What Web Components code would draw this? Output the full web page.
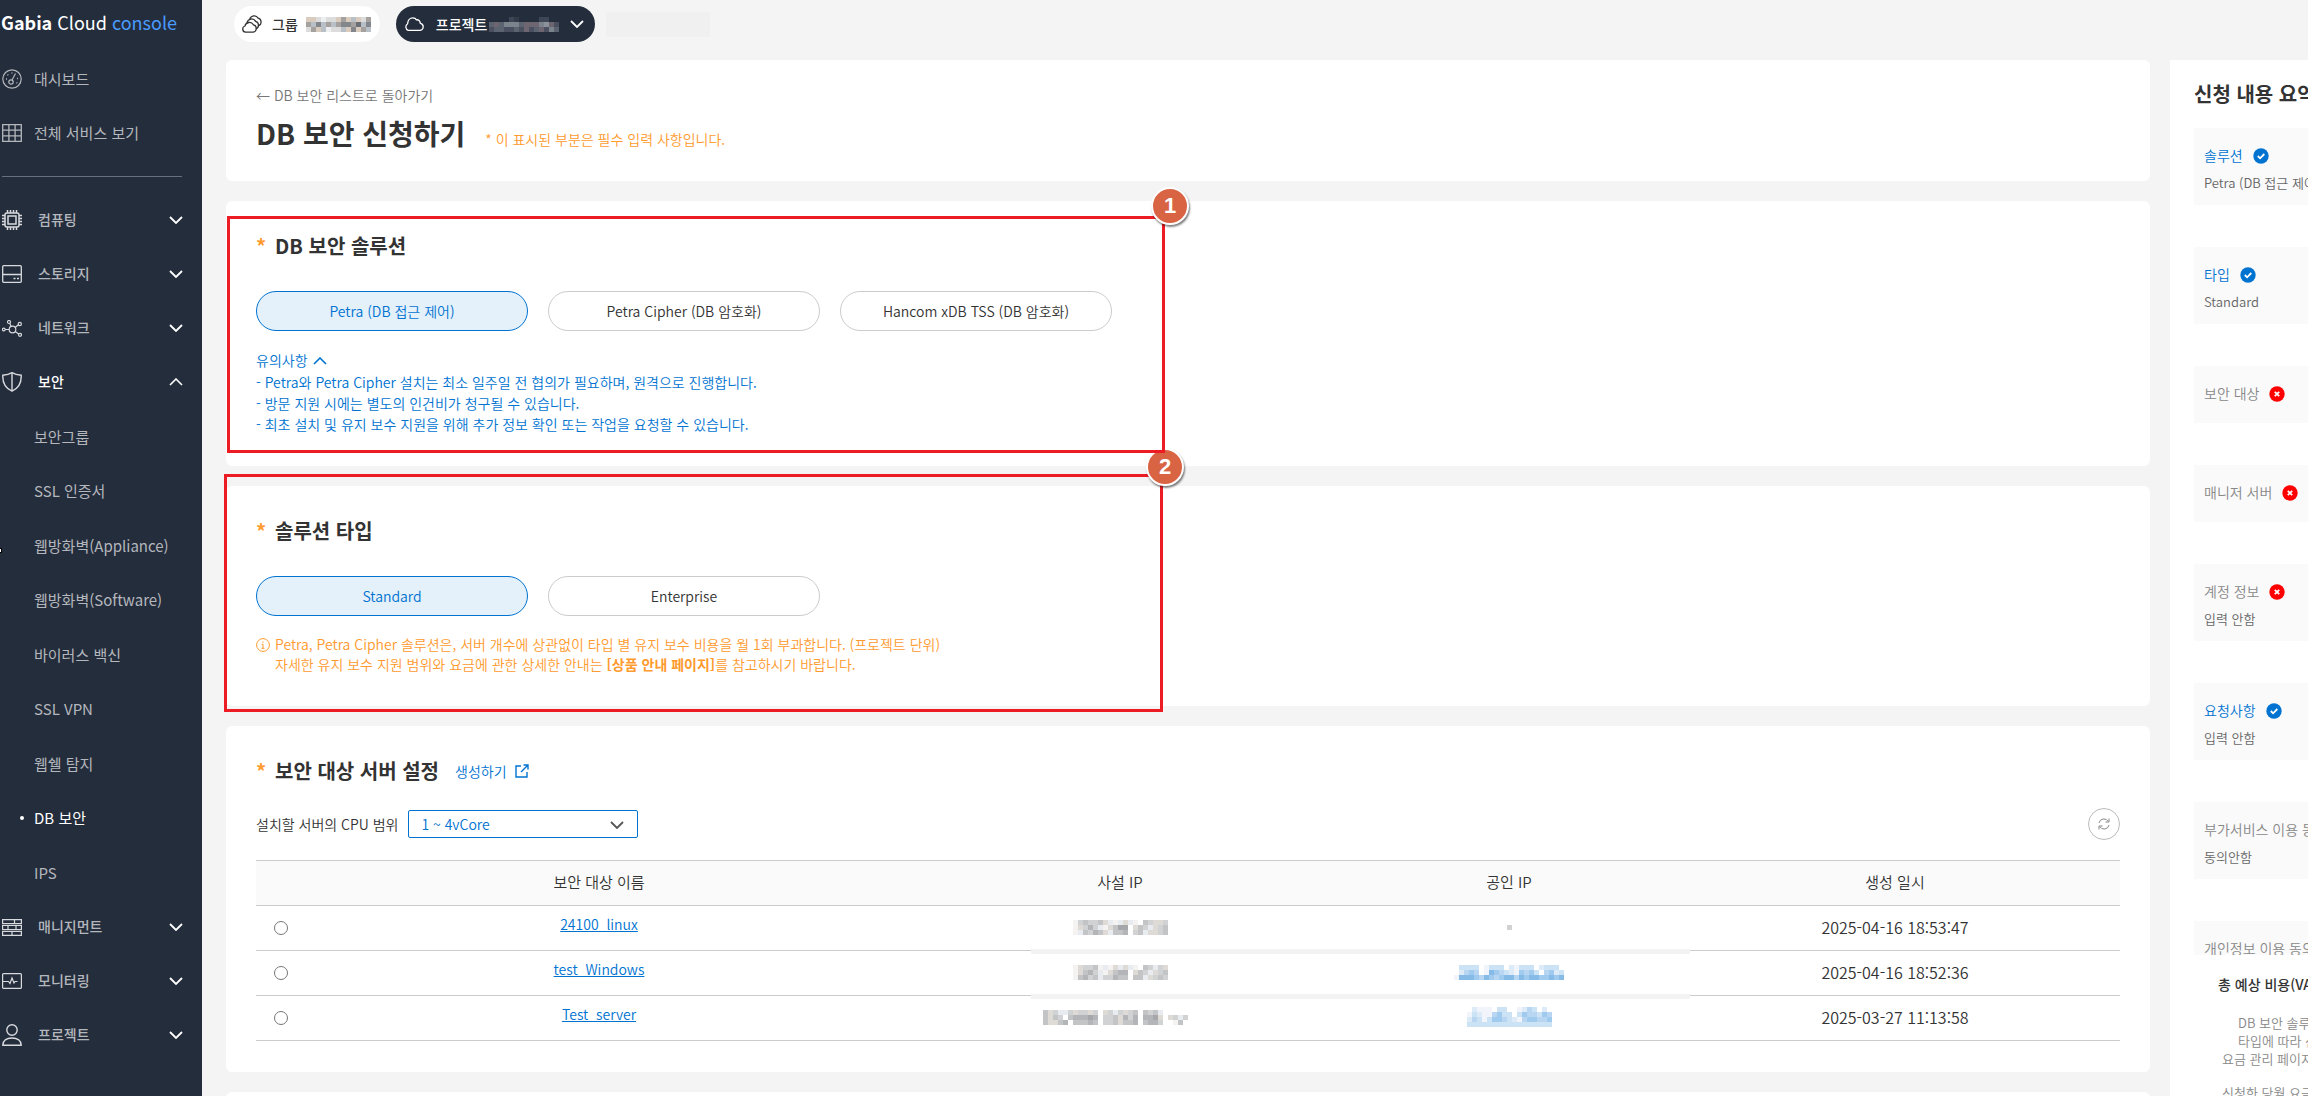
<!DOCTYPE html>
<html lang="ko">
<head>
<meta charset="utf-8">
<title>Gabia Cloud console</title>
<style>
  * { box-sizing: border-box; }
  html, body { height: 100%; margin: 0; }
  body {
    font-family: "Noto Sans CJK KR", "Noto Sans", sans-serif;
    font-size: 14px;
    font-weight: 350;
    line-height: 20px;
    color: #333;
    background: #f4f4f4;
    overflow: hidden;
    --blue: #0073d1;
    --orange: #ff9a2e;
    --navy: #242d3c;
  }
</style>
</head>
<body>
<console-app>
  <console-sidebar slot="side"></console-sidebar>
  <console-topbar slot="top"></console-topbar>

  <page-heading></page-heading>

  <form-card label="DB 보안 솔루션">
    <choice-group options="Petra (DB 접근 제어)|Petra Cipher (DB 암호화)|Hancom xDB TSS (DB 암호화)"></choice-group>
    <notice-list></notice-list>
    <step-marker slot="over" number="1"></step-marker>
  </form-card>

  <form-card label="솔루션 타입">
    <choice-group options="Standard|Enterprise"></choice-group>
    <price-info></price-info>
    <step-marker slot="over" number="2"></step-marker>
  </form-card>

  <form-card label="보안 대상 서버 설정">
    <create-link slot="extra"></create-link>
    <server-picker></server-picker>
  </form-card>

  <form-card label=""></form-card>

  <order-summary slot="aside"></order-summary>
</console-app>

<script>
function createComponent({ name, styles, template }) {
  customElements.define(name, class extends HTMLElement {
    constructor() {
      super();
      this.attachShadow({ mode: 'open' });
    }
    connectedCallback() {
      this.shadowRoot.innerHTML =
        `<style>*{box-sizing:border-box}a{color:inherit}button,select{font:inherit}${styles}</style>` + template(this);
    }
  });
}

// ---- icons ----------------------------------------------------------------
const svg = (w, h, body, extra = '') =>
  `<svg width="${w}" height="${h}" viewBox="0 0 ${w} ${h}" fill="none" stroke="currentColor" ${extra} aria-hidden="true">${body}</svg>`;

const icons = {
  dash: svg(20, 20, '<circle cx="10" cy="10" r="9.2"/><circle cx="9" cy="13" r="2.2"/><path d="M10 11l3.500-6.500"/><path d="M4 10h1M5.500 5.500l.8.800M10 3.500v1M15 9.500h1M14.500 13.500l.8.600" stroke-width="1.400"/>', 'stroke-width="1.200"'),
  grid: svg(20, 18, '<path d="M.7.700h18.600v16.600H.7zM.7 6.200h18.600M.7 11.800h18.600M6.900.700v16.600M13.100.700v16.600"/>', 'stroke-width="1.300"'),
  chip: svg(20, 20, '<rect x="3" y="3" width="14" height="14" rx="2"/><rect x="6" y="6" width="8" height="8" stroke-width="1.500"/><path d="M5.500 0v3M8.500 0v3M11.500 0v3M14.500 0v3M5.500 17v3M8.500 17v3M11.500 17v3M14.500 17v3M0 5.500h3M0 8.500h3M0 11.500h3M0 14.500h3M17 5.500h3M17 8.500h3M17 11.500h3M17 14.500h3"/>', 'stroke-width="1.500"'),
  disk: svg(20, 18, '<rect x=".7" y=".7" width="18.600" height="16.600" rx="1"/><path d="M.7 9.500h18.600M11.500 13.500h2M15 13.500h2"/>', 'stroke-width="1.300"'),
  net: svg(20, 17, '<circle cx="10.500" cy="9.500" r="3.300"/><circle cx="1.800" cy="9.500" r="1.400"/><circle cx="7" cy="2" r="1.500"/><circle cx="17.800" cy="4" r="1.600"/><circle cx="18" cy="14.800" r="1.500"/><path d="M3.200 9.500h4M7.700 3.300l1.400 3.200M16.400 4.800l-3.300 2.700M13.200 11.500l3.500 2.500"/>', 'stroke-width="1.200"'),
  shield: svg(20, 20, '<path d="M10 .7C7.500 2.200 4 3 .8 3.200c-.3 6 1.200 12.300 9.200 16 8-3.700 9.500-10 9.200-16C16 3 12.500 2.200 10 .7z"/><path d="M10 1v18"/>', 'stroke-width="1.400"'),
  bricks: svg(20, 17, '<path d="M.6.600h18.800v4H.6zM.6 6.500h18.800v4H.6zM.6 12.400h18.800v4H.6zM12.500.600v4M6 6.500v4M14 6.500v4M10 12.400v4"/>', 'stroke-width="1.200"'),
  pulse: svg(20, 16, '<rect x=".6" y=".6" width="18.800" height="14.800" rx="1"/><path d="M1 8.500h5.500l1.500 2 2-5.500 2 5 1-1.500h2.500"/>', 'stroke-width="1.200"'),
  user: svg(20, 22, '<circle cx="10" cy="6" r="5.200"/><path d="M.8 21.200c0-4.500 3.700-7.200 9.200-7.200s9.200 2.700 9.200 7.200z"/>', 'stroke-width="1.400"'),
  down: svg(14, 8, '<path d="M1 1l6 6 6-6"/>', 'stroke-width="1.800"'),
  up: svg(14, 8, '<path d="M1 7l6-6 6 6"/>', 'stroke-width="1.600"'),
  clouds: svg(22, 18, '<path d="M3.500 17.200a3.200 3.200 0 0 1-.6-6.200 4.600 4.600 0 0 1 8.500-1.200 3.800 3.800 0 0 1-.2 7.400z"/><path d="M5 7.800a4.600 4.600 0 0 1 8.600-1.400 3.900 3.900 0 0 1 .4 7.400"/><path d="M7.800 4.200a4.600 4.600 0 0 1 8.400-1 4 4 0 0 1 .5 7.500"/>', 'stroke-width="1.300"'),
  cloud: svg(20, 14, '<path d="M4.200 13.300a3.700 3.700 0 0 1-.6-6.600C3.800 3.300 6 .8 8.800.8c2 0 3 .8 3.700 2 2-.3 3.600 1 3.700 3.300 2 .6 3 2 3 3.700 0 2-1.500 3.500-3.500 3.500z"/>', 'stroke-width="1.300"'),
  info: svg(14, 14, '<circle cx="7" cy="7" r="6.400"/><path d="M7 3.500v1.300M5.700 6.300H7v4M5.500 10.300h3"/>', 'stroke-width="1"'),
  external: svg(14, 14, '<path d="M6 2H1v11h11V8"/><path d="M8.500 1H13v4.500M13 1L6 8"/>', 'stroke-width="1.400"'),
  refresh: svg(14, 14, '<path d="M2 6a5 5 0 0 1 9.300-1.500M12 1.500v3.500H8.500M12 8a5 5 0 0 1-9.300 1.500M2 12.500V9h3.500"/>'),
  ok: '<svg width="16" height="16" viewBox="0 0 16 16" role="img" aria-label="완료"><circle cx="8" cy="8" r="7.700" fill="#0073d1"/><path d="M4.800 8l2.300 2.300L11.300 6" fill="none" stroke="#fff" stroke-width="1.800"/></svg>',
  no: '<svg width="16" height="16" viewBox="0 0 16 16" role="img" aria-label="미완료"><circle cx="8" cy="8" r="7.700" fill="#f00"/><path d="M5.800 5.800l4.400 4.400M10.200 5.800l-4.400 4.400" fill="none" stroke="#fff" stroke-width="1.800"/></svg>'
};

// Masked value: every character is one 5px tile, the digit is its strength.
const tones = {
  gray: ['#fff', '#f5f2f2', '#e8ebef', '#dedad6', '#d0d2d4', '#c3c4c6', '#b4b5b8', '#a6a7aa'],
  blue: ['#fff', '#f1f5fb', '#dcebf7', '#cce2f5', '#b8d6f1', '#a0caee', '#86bbe8', '#6fa9dd'],
  mixed: ['#fff', '#eceef0', '#dcdcdc', '#d9cbbd', '#b9bfc7', '#a5a19f', '#83878c', '#6b6e75'],
  dark: ['#242d3c', '#313a49', '#3d4655', '#4b5060', '#5c6370', '#6d6570', '#7b838c', '#8b929a']
};
createComponent({
  name: 'masked-value',
  styles: ':host{display:inline-block;vertical-align:middle}svg{display:block}',
  template(el) {
    const rows = el.getAttribute('tiles').split(',');
    const tone = tones[el.getAttribute('tone') || 'gray'];
    const rects = rows.map((row, y) => [...row].map((c, x) =>
      c === '0' ? '' : `<rect x="${x * 5}" y="${y * 5}" width="5" height="5" fill="${tone[c]}"/>`).join('')).join('');
    return `<svg width="${rows[0].length * 5}" height="${rows.length * 5}" shape-rendering="crispEdges" aria-hidden="true">${rects}</svg>`;
  }
});

// ---- frame ----------------------------------------------------------------
createComponent({
  name: 'console-app',
  styles: `
    :host { display: flex; height: 100vh; overflow: hidden; }
    .body { flex: 1; min-width: 0; display: flex; flex-direction: column; padding-left: 24px; }
    .columns { flex: 1; min-height: 0; display: flex; gap: 20px; }
    main { flex: 1; min-width: 0; display: flex; flex-direction: column; gap: 20px; }
    slot[name=aside] { display: contents; }`,
  template: () => `
    <slot name="side"></slot>
    <div class="body">
      <slot name="top"></slot>
      <div class="columns"><main><slot></slot></main><slot name="aside"></slot></div>
    </div>`
});

const securityMenu = ['보안그룹', 'SSL 인증서', '웹방화벽(Appliance)', '웹방화벽(Software)', '바이러스 백신', 'SSL VPN', '웹쉘 탐지', 'DB 보안', 'IPS'];
const menu = [
  ['chip', '컴퓨팅'], ['disk', '스토리지'], ['net', '네트워크'], ['shield', '보안', securityMenu],
  ['bricks', '매니지먼트'], ['pulse', '모니터링'], ['user', '프로젝트']
];

createComponent({
  name: 'console-sidebar',
  styles: `
    :host { display: block; position: relative; flex: 0 0 202px; background: var(--navy); color: #b4b7bc; font-weight: 400; }
    .logo { display: block; padding: 9px 0 0 1px; font-size: 18px; line-height: 26px; font-weight: 400; color: #fff; text-decoration: none; white-space: nowrap; }
    .logo span { color: #4a9bff; }
    .main-links { margin: 17px 20px 16px 2px; padding-bottom: 16px; border-bottom: 1px solid #687080; }
    .main-links a { display: flex; align-items: center; gap: 12px; height: 54px; font-size: 15px; text-decoration: none; }
    ul { list-style: none; margin: 0; padding: 0; }
    button { display: flex; align-items: center; width: 100%; height: 54px; padding: 0 19px 0 2px; border: 0; background: none; color: inherit; font-weight: 500; text-align: left; }
    button span { flex: 1; padding: 0 0 2px 16px; }
    button svg:last-child { color: #fff; }
    button svg:first-child { color: #d8dade; }
    .open { color: #fff; }
    li li { display: flex; align-items: center; height: 54px; font-size: 15px; }
    li li:nth-child(odd) { height: 55px; }
    li li a { padding-left: 34px; text-decoration: none; }
    li li a[aria-current] { color: #fff; padding-left: 10px; }
    li li:has([aria-current])::before { content: ""; width: 4px; height: 4px; margin-left: 20px; border-radius: 2px; background: #fff; }
    .tick { position: absolute; top: 50%; left: 0; width: 2px; height: 5px; border: 1px solid #000; border-left: 0; background: #fff; }`,
  template: () => `
    <a class="logo" href="#"><b>Gabia</b> Cloud <span>console</span></a>
    <nav class="main-links">
      <a href="#">${icons.dash}대시보드</a>
      <a href="#">${icons.grid}전체 서비스 보기</a>
    </nav>
    <nav><ul>${menu.map(([icon, text, subs]) => `
      <li><button type="button" aria-expanded="${!!subs}" class="${subs ? 'open' : ''}">${icons[icon]}<span>${text}</span>${subs ? icons.up : icons.down}</button>
      ${subs ? `<ul>${subs.map(s => `<li><a href="#"${s === 'DB 보안' ? ' aria-current="page"' : ''}>${s}</a></li>`).join('')}</ul>` : ''}</li>`).join('')}
    </ul></nav>
    <div class="tick"></div>`
});

createComponent({
  name: 'console-topbar',
  styles: `
    :host { display: flex; flex: 0 0 60px; align-items: flex-start; gap: 16px; padding: 6px 0 0 8px; }
    button { display: flex; align-items: center; height: 36px; border: 0; border-radius: 18px; background: #fff; color: #333; font-weight: 500; }
    .group { gap: 8px; padding: 0 9px 0 8px; }
    .project { gap: 2px; padding: 0 11px 0 8px; background: var(--navy); color: #fff; }
    .project span { padding-left: 10px; }
    .project svg:last-child { margin-left: 9px; }
    .blank { width: 104px; height: 25px; margin: 6px 0 0 -5px; background: #f0f0f0; }`,
  template: () => `
    <button type="button" class="group">${icons.clouds}<span>그룹</span>
      <masked-value tone="mixed" tiles="3321223534325,5464545665746,2534122436354"></masked-value></button>
    <button type="button" class="project">${icons.cloud}<span>프로젝트</span>
      <masked-value tone="dark" tiles="00002100002200,45466645556753,34433435345364"></masked-value>${icons.down}</button>
    <div class="blank"></div>`
});

// ---- form -----------------------------------------------------------------
createComponent({
  name: 'page-heading',
  styles: `
    :host { display: block; flex: none; padding: 25px 30px 28px; background: #fff; border-radius: 6px; }
    a { display: block; color: #777; text-decoration: none; }
    div { display: flex; align-items: baseline; gap: 20px; margin-top: 8px; }
    h1 { margin: 0; font-size: 28px; line-height: 40px; font-weight: 700; }
    p { margin: 0; color: var(--orange); }`,
  template: () => `
    <a href="#">← DB 보안 리스트로 돌아가기</a>
    <div><h1>DB 보안 신청하기</h1><p>* 이 표시된 부분은 필수 입력 사항입니다.</p></div>`
});

createComponent({
  name: 'form-card',
  styles: `
    :host { display: block; flex: none; position: relative; padding: 30px 30px 31px; background: #fff; border-radius: 6px; }
    header { display: flex; align-items: center; gap: 16px; }
    h2 { margin: 0; font-size: 20px; line-height: 30px; font-weight: 700; }
    h2 i { display: inline-block; width: 19px; font-style: normal; color: var(--orange); }`,
  template: el => `
    ${el.getAttribute('label') ? `<header><h2><i>*</i>${el.getAttribute('label')}</h2><slot name="extra"></slot></header>` : ''}
    <slot></slot><slot name="over"></slot>`
});

createComponent({
  name: 'choice-group',
  styles: `
    :host { display: flex; gap: 20px; margin-top: 30px; }
    button { width: 272px; height: 40px; border: 1px solid #ccc; border-radius: 20px; background: #fff; color: #333; }
    button[aria-pressed=true] { border-color: var(--blue); background: #e4f0fa; color: var(--blue); }`,
  template: el => el.getAttribute('options').split('|')
    .map((o, i) => `<button type="button" aria-pressed="${i === 0}">${o}</button>`).join('')
});

createComponent({
  name: 'notice-list',
  styles: `
    :host { display: block; margin-top: 19px; color: var(--blue); line-height: 21px; }
    button { display: flex; align-items: center; gap: 5px; margin-bottom: 1px; padding: 0; border: 0; background: none; color: inherit; }
    p { margin: 0; }`,
  template: () => `
    <button type="button" aria-expanded="true">유의사항 ${icons.up}</button>
    <p>- Petra와 Petra Cipher 설치는 최소 일주일 전 협의가 필요하며, 원격으로 진행합니다.</p>
    <p>- 방문 지원 시에는 별도의 인건비가 청구될 수 있습니다.</p>
    <p>- 최초 설치 및 유지 보수 지원을 위해 추가 정보 확인 또는 작업을 요청할 수 있습니다.</p>`
});

createComponent({
  name: 'price-info',
  styles: `
    :host { display: flex; gap: 5px; margin-top: 18px; padding-bottom: 1px; color: var(--orange); }
    svg { flex: none; margin-top: 4px; }
    p { margin: 0; }
    a { font-weight: 700; text-decoration: none; }`,
  template: () => `${icons.info}
    <p>Petra, Petra Cipher 솔루션은, 서버 개수에 상관없이 타입 별 유지 보수 비용을 월 1회 부과합니다. (프로젝트 단위)<br>
    자세한 유지 보수 지원 범위와 요금에 관한 상세한 안내는 <a href="#">[상품 안내 페이지]</a>를 참고하시기 바랍니다.</p>`
});

// red frame with a numbered badge, laid over its card
createComponent({
  name: 'step-marker',
  styles: `
    :host { position: absolute; z-index: 2; top: 15px; left: 1px; width: 938px; height: 237px; border: 3px solid #ed1c24; pointer-events: none; }
    :host([number="2"]) { z-index: 1; top: -12px; left: -2px; width: 939px; height: 238px; }
    b { position: absolute; top: -32px; right: -27px; width: 38px; height: 38px; border: 2px solid #fff; border-radius: 50%; background: #d96444; color: #fff;
      font: bold 22px/34px "Liberation Sans", sans-serif; text-align: center; box-shadow: 1px 2px 2px rgba(0,0,0,.5); }
    :host([number="2"]) b { top: -29px; right: -24px; }`,
  template: el => `<b>${el.getAttribute('number')}</b>`
});

createComponent({
  name: 'create-link',
  styles: ':host{display:block}a{display:flex;align-items:center;gap:8px;color:var(--blue);text-decoration:none}',
  template: () => `<a href="#">생성하기 ${icons.external}</a>`
});

const v = (tiles, tone = 'gray') => `<masked-value tone="${tone}" tiles="${tiles}"></masked-value>`;
const servers = [
  ['24100_linux', v('1454453212321054334,1346421357703542345,1254653255604523345'), v('040'), '2025-04-16 18:53:47'],
  ['test_Windows', v('1344512132321054243,1356421356603542345,1564524465505523454'), v('0333301333021333023330,0245401654321545304523,1666546545664656655656', 'blue'), '2025-04-16 18:52:36'],
  ['Test_server', v('5342243443403424345054520000000,5354056667604453646066730342400,5335605556504453556056640015000'), v('02111033001243020,13211453303544354,24313554321455445,33333333333333333', 'blue'), '2025-03-27 11:13:58']
];

createComponent({
  name: 'server-picker',
  styles: `
    :host { display: block; }
    .bar { display: flex; align-items: center; gap: 10px; margin: 22px 0 20px; }
    .select { position: relative; }
    .select svg { position: absolute; top: 11px; right: 14px; color: #555; pointer-events: none; }
    select { width: 230px; height: 28px; padding: 0 12px; border: 1px solid var(--blue); border-radius: 2px; background: #fff; color: var(--blue); appearance: none; }
    .bar button { display: grid; place-items: center; width: 32px; height: 32px; margin-left: auto; padding: 0; border: 1px solid #bbb; border-radius: 50%; background: #fff; color: #888; }
    .wrap { position: relative; }
    table { width: 100%; table-layout: fixed; border-collapse: collapse; border-top: 1px solid #ccc; font-size: 15px; }
    th, td { height: 45px; padding: 0 0 2px; border-bottom: 1px solid #ccc; text-align: center; font-weight: 350; }
    th { background: #fafafa; }
    td:first-child { text-align: left; }
    td:last-child { font-size: 16px; }
    td masked-value { display: block; width: fit-content; margin: 0 auto; }
    input { display: block; width: 14px; height: 14px; margin: 2px 0 0 18px; }
    td a { display: inline-block; padding-bottom: 6px; color: var(--blue); font-size: 14px; }
    .smear { position: absolute; top: 89px; left: 775px; width: 659px; height: 5px; background: #f3f3f3; }
    .smear + .smear { top: 134px; }`,
  template: () => `
    <div class="bar">
      <label for="cpu">설치할 서버의 CPU 범위</label>
      <div class="select"><select id="cpu"><option>1 ~ 4vCore</option></select>${icons.down}</div>
      <button type="button" aria-label="새로고침">${icons.refresh}</button>
    </div>
    <div class="wrap">
      <table>
        <colgroup><col style="width:50px"><col style="width:586px"><col style="width:456px"><col style="width:322px"><col style="width:450px"></colgroup>
        <thead><tr><th></th><th>보안 대상 이름</th><th>사설 IP</th><th>공인 IP</th><th>생성 일시</th></tr></thead>
        <tbody>${servers.map(([host, priv, pub, date]) => `
          <tr><td><input type="radio" name="server" aria-label="${host}"></td><td><a href="#">${host}</a></td><td>${priv}</td><td>${pub}</td><td>${date}</td></tr>`).join('')}
        </tbody>
      </table>
      <div class="smear"></div><div class="smear"></div>
    </div>`
});

// ---- order summary --------------------------------------------------------
const summary = [
  ['솔루션', 'ok', 'Petra (DB 접근 제어)'], ['타입', 'ok', 'Standard'], ['보안 대상', 'no'], ['매니저 서버', 'no'],
  ['계정 정보', 'no', '입력 안함'], ['요청사항', 'ok', '입력 안함'], ['부가서비스 이용 동의', '', '동의안함'], ['개인정보 이용 동의', '', '']
];

createComponent({
  name: 'order-summary',
  styles: `
    :host { display: flex; flex-direction: column; flex: 0 0 138px; background: #fff; overflow: hidden; white-space: nowrap; }
    h2 { margin: 19px 0 19px 24px; font-size: 20px; line-height: 30px; font-weight: 700; }
    dl { flex: 1; min-height: 0; display: flex; flex-direction: column; gap: 42px; margin: 0 0 0 24px; overflow: hidden; }
    dl div { flex: none; padding: 17px 10px 19px; background: #fafafa; }
    dt { display: flex; align-items: center; gap: 10px; color: #888; line-height: 21px; }
    dt.ok { color: var(--blue); }
    dt svg { flex: none; }
    dd { margin: 0 0 -4px; padding-top: 10px; font-size: 13px; line-height: 14px; color: #666; }
    footer { flex: 0 0 141px; padding: 19px 0 0 48px; overflow: hidden; }
    footer p { margin: 0 0 16px; padding-left: 4px; font-size: 13px; line-height: 18px; color: #888; }
    footer strong { display: block; margin-bottom: 20px; font-weight: 500; }
    footer span { display: block; }
    .in { padding-left: 16px; }`,
  template: () => `
    <h2>신청 내용 요약</h2>
    <dl>${summary.map(([label, state, value]) => `
      <div><dt class="${state}">${label}${icons[state] || ''}</dt>${value === undefined ? '' : `<dd>${value}</dd>`}</div>`).join('')}
    </dl>
    <footer>
      <strong>총 예상 비용(VAT</strong>
      <p><span class="in">DB 보안 솔루션</span><span class="in">타입에 따라 선</span><span>요금 관리 페이지</span></p>
      <p>신청한 당월 요금</p>
    </footer>`
});
</script>
</body>
</html>
